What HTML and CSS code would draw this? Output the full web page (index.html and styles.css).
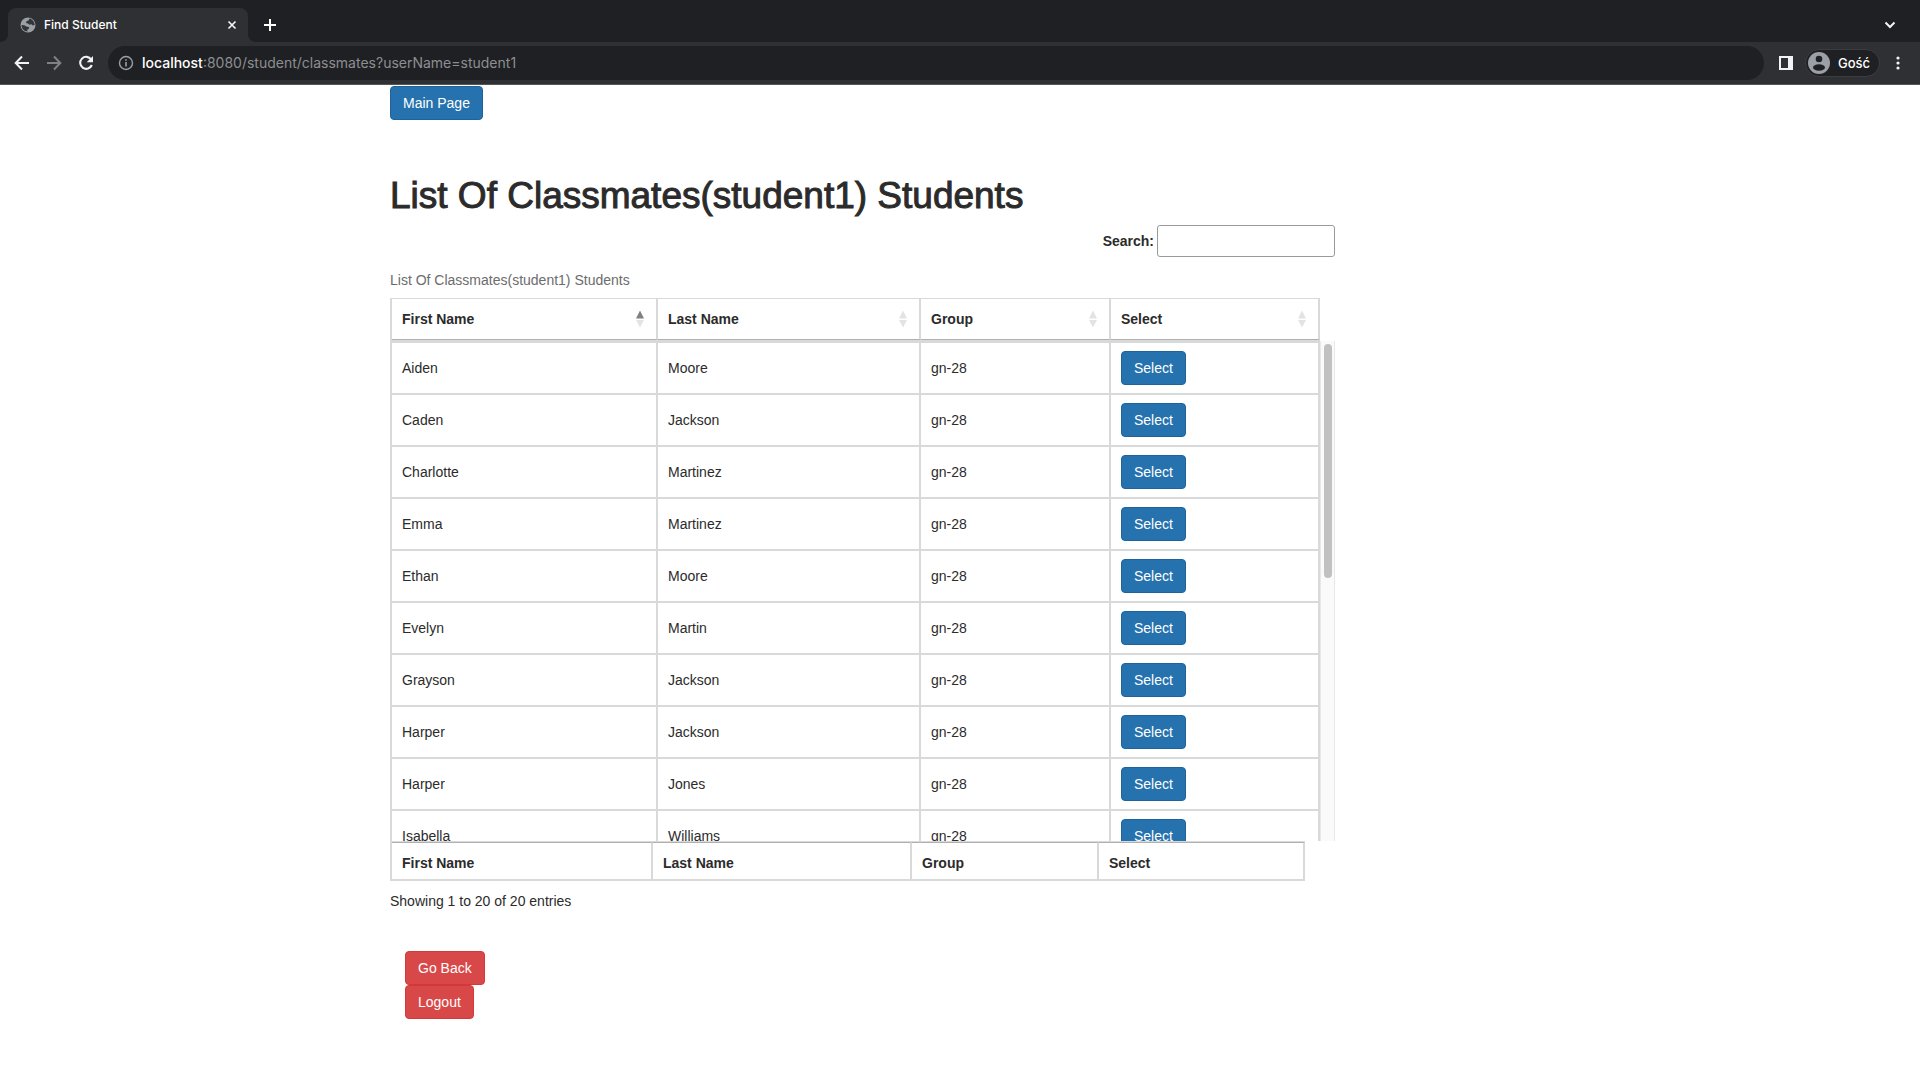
FILE: index.html
```html
<!DOCTYPE html>
<html lang="en">
<head>
<meta charset="utf-8">
<title>Find Student</title>
<link rel="stylesheet" href="styles.css">
</head>
<body>
<header class="browser">
  <div class="tabstrip">
    <div class="tab">
      <svg class="globe" width="16" height="16" viewBox="0 0 16 16"><circle cx="8" cy="8" r="7.500" fill="#9aa0a6"/><path d="M9.500 1.500L8.500 3.500 6.500 4.200 6 6l2 .5 1.500 1.300 2-.6 1.300 1.300 1.900-.5C14.600 5 12.500 2.200 9.500 1.500zM1.500 8l2.800.2L6.500 9.500l2.800.7-.6 1.800-1.500.8.300 1.600C4 14.500 1.500 11.500 1.500 8z" fill="#35363a"/></svg>
      <span class="tab-title">Find Student</span>
      <button class="icon-btn" aria-label="Close tab"><svg width="10" height="10" viewBox="0 0 10 10"><path d="M1.500 1.500l7 7M8.500 1.500l-7 7" stroke="#f1f3f4" stroke-width="1.700"/></svg></button>
    </div>
    <button class="icon-btn new-tab" aria-label="New tab"><svg width="14" height="14" viewBox="0 0 14 14"><path d="M7 1v12M1 7h12" stroke="#fff" stroke-width="2"/></svg></button>
    <button class="icon-btn tab-search" aria-label="Search tabs"><svg width="12" height="8" viewBox="0 0 12 8"><path d="M1.500 1.500L6 6l4.500-4.500" fill="none" stroke="#f1f3f4" stroke-width="2"/></svg></button>
  </div>
  <div class="toolbar">
    <button class="icon-btn nav" aria-label="Back"><svg width="16" height="16" viewBox="0 0 16 16"><path d="M15 8H2M8 1.500L1.700 8 8 14.500" fill="none" stroke="#f1f3f4" stroke-width="2"/></svg></button>
    <button class="icon-btn nav" aria-label="Forward"><svg width="16" height="16" viewBox="0 0 16 16"><path d="M1 8h13M8 1.500L14.300 8 8 14.500" fill="none" stroke="#808185" stroke-width="2"/></svg></button>
    <button class="icon-btn nav" aria-label="Reload"><svg width="16" height="16" viewBox="0 0 16 16"><path d="M13.200 4.500A6 6 0 1 0 13.800 10" fill="none" stroke="#f1f3f4" stroke-width="2.100"/><path d="M15 1v6.300H8.700z" fill="#f1f3f4"/></svg></button>
    <div class="address">
      <svg width="16" height="16" viewBox="0 0 16 16"><circle cx="8" cy="8" r="6.500" fill="none" stroke="#9aa0a6" stroke-width="1.400"/><path d="M8 7v4.500M8 4.200v1.600" stroke="#9aa0a6" stroke-width="1.600"/></svg>
      <span class="url"><b>localhost</b>:8080/student/classmates?userName=student1</span>
    </div>
    <button class="icon-btn panel" aria-label="Side panel"><svg width="14" height="14" viewBox="0 0 14 14"><path fill-rule="evenodd" d="M0 0h14v14H0zM2 2v10h7V2z" fill="#f1f3f4"/></svg></button>
    <button class="profile"><svg width="22" height="22" viewBox="0 0 22 22"><circle cx="11" cy="11" r="11" fill="#9aa0a6"/><circle cx="11" cy="7" r="3.300" fill="#202124"/><ellipse cx="11" cy="15.500" rx="6" ry="3.300" fill="#202124"/></svg>Gość</button>
    <button class="icon-btn menu" aria-label="Menu"><svg width="4" height="14" viewBox="0 0 4 14"><g fill="#f1f3f4"><circle cx="2" cy="2" r="1.600"/><circle cx="2" cy="7" r="1.600"/><circle cx="2" cy="12" r="1.600"/></g></svg></button>
  </div>
</header>

<main class="container">
  <div class="content">
    <a class="btn btn-primary" href="#">Main Page</a>
    <h1>List Of Classmates(student1) Students</h1>
    <div class="filter">
      <label for="search">Search:</label>
      <input id="search" type="search">
    </div>
    <p class="caption" id="caption">List Of Classmates(student1) Students</p>

    <table class="grid grid-head">
      <colgroup><col class="c-first"><col class="c-last"><col class="c-group"><col></colgroup>
      <thead><tr>
        <th><div class="sort asc">First Name</div></th>
        <th><div class="sort">Last Name</div></th>
        <th><div class="sort">Group</div></th>
        <th><div class="sort">Select</div></th>
      </tr></thead>
    </table>
    <div class="scroll">
      <div class="rows">
        <table class="grid grid-body" aria-labelledby="caption">
          <colgroup><col class="c-first"><col class="c-last"><col class="c-group"><col></colgroup>
          <tbody>
            <tr><td>Aiden</td><td>Moore</td><td>gn-28</td><td><a class="btn btn-primary" href="#">Select</a></td></tr>
            <tr><td>Caden</td><td>Jackson</td><td>gn-28</td><td><a class="btn btn-primary" href="#">Select</a></td></tr>
            <tr><td>Charlotte</td><td>Martinez</td><td>gn-28</td><td><a class="btn btn-primary" href="#">Select</a></td></tr>
            <tr><td>Emma</td><td>Martinez</td><td>gn-28</td><td><a class="btn btn-primary" href="#">Select</a></td></tr>
            <tr><td>Ethan</td><td>Moore</td><td>gn-28</td><td><a class="btn btn-primary" href="#">Select</a></td></tr>
            <tr><td>Evelyn</td><td>Martin</td><td>gn-28</td><td><a class="btn btn-primary" href="#">Select</a></td></tr>
            <tr><td>Grayson</td><td>Jackson</td><td>gn-28</td><td><a class="btn btn-primary" href="#">Select</a></td></tr>
            <tr><td>Harper</td><td>Jackson</td><td>gn-28</td><td><a class="btn btn-primary" href="#">Select</a></td></tr>
            <tr><td>Harper</td><td>Jones</td><td>gn-28</td><td><a class="btn btn-primary" href="#">Select</a></td></tr>
            <tr><td>Isabella</td><td>Williams</td><td>gn-28</td><td><a class="btn btn-primary" href="#">Select</a></td></tr>
          </tbody>
        </table>
      </div>
      <div class="track"><div class="thumb"></div></div>
    </div>
    <table class="grid grid-foot">
      <colgroup><col class="f-first"><col class="f-last"><col class="f-group"><col></colgroup>
      <tfoot><tr><th>First Name</th><th>Last Name</th><th>Group</th><th>Select</th></tr></tfoot>
    </table>
    <p class="info">Showing 1 to 20 of 20 entries</p>
    <div class="actions">
      <a class="btn btn-danger" href="#">Go Back</a>
      <a class="btn btn-danger" href="#">Logout</a>
    </div>
  </div>
</main>
</body>
</html>
```
FILE: styles.css
```css
* { box-sizing: border-box; }
body {
  margin: 0;
  background: #fff;
  color: #2b2b2b;
  font: 14px/20px "Helvetica Neue", "Liberation Sans", Arial, sans-serif;
}

/* browser frame */
.browser { background: #1f2023; border-bottom: 1px solid #55565a; font-family: Inter, sans-serif; color: #fff; }
.tabstrip { display: flex; align-items: center; height: 42px; padding: 8px 24px 0 8px; }
.tab {
  position: relative;
  display: flex; align-items: center; gap: 8px;
  width: 240px; height: 34px; padding: 0 11px 0 12px;
  background: #2f3034; border-radius: 8px 8px 0 0;
}
.tab::before, .tab::after {
  content: ""; position: absolute; bottom: 0; width: 8px; height: 8px;
}
.tab::before { left: -8px; background: radial-gradient(circle at 0 0, #1f2023 8px, #2f3034 8px); }
.tab::after { right: -8px; background: radial-gradient(circle at 100% 0, #1f2023 8px, #2f3034 8px); }
.tab-title { flex: 1; font-size: 12px; font-weight: 500; }
.icon-btn { display: flex; padding: 0; border: 0; background: none; }
.new-tab { margin-left: 15px; }
.tab-search { margin-left: auto; }
.toolbar { display: flex; align-items: center; height: 42px; padding: 0 20px 0 14px; background: #2f3034; }
.nav { margin-right: 16px; }
.nav + .nav + .nav { margin-right: 14px; }
.address {
  flex: 1; display: flex; align-items: center; gap: 8px;
  height: 34px; padding: 0 10px; border-radius: 17px; background: #1f2023;
}
.url { font-size: 14px; color: #8d8e91; }
.url b { color: #fff; font-weight: 500; }
.panel { margin: 0 12px 0 15px; }
.profile {
  display: flex; align-items: center; gap: 8px;
  height: 28px; padding: 0 9px 0 2px;
  border: 1px solid #3c3d41; border-radius: 14px; background: #1f2023;
  color: #fff; font: 500 13px/20px Inter, sans-serif;
}
.menu { margin-left: 16px; }

/* page */
.container { max-width: 1170px; margin: 0 auto; padding: 1px 15px 0; }
.content { max-width: 945px; }
.btn {
  display: inline-block; padding: 6px 12px;
  border: 1px solid; border-radius: 4px;
  color: #fff; text-decoration: none; vertical-align: middle;
}
.btn-primary { background: #2672ae; border-color: #20639a; }
.btn-danger { background: #d94848; border-color: #d43838; }
h1 { margin: 54px 0 8px; font-size: 37px; line-height: 43px; font-weight: 400; -webkit-text-stroke: 1px currentColor; }
.filter { display: flex; justify-content: flex-end; align-items: center; gap: 3px; }
.filter label { font-weight: 700; }
.filter input {
  width: 178px; height: 32px; padding: 5px;
  border: 1px solid #999; border-radius: 3px; background: #fff; font: inherit;
  appearance: none;
}
.caption { margin: 13px 0 8px; color: #6c6c6c; }

.grid {
  width: 930px; table-layout: fixed;
  border-collapse: separate; border-spacing: 0;
  border: 0 solid #d9d9d9; border-left-width: 2px;
}
.grid th, .grid td { padding: 8px 10px; border: 0 solid #d9d9d9; border-right-width: 2px; text-align: left; }
.grid .c-first { width: 266px; }
.grid .c-last { width: 263px; }
.grid .c-group { width: 190px; }
.grid-head { border-top-width: 1px; border-bottom-width: 1px; }
.grid-head th { padding: 10px; border-bottom: 1px solid #b0b0b0; }
.sort { display: flex; justify-content: space-between; align-items: center; }
.sort::after {
  content: ""; width: 8px; height: 17px; margin-right: 2px;
  background: #e3e3e3;
  clip-path: polygon(50% 0, 100% 47%, 0 47%, 0 56%, 100% 56%, 50% 100%, 0 56%, 0 47%);
}
.sort.asc::after { background: linear-gradient(#808080 50%, #e3e3e3 50%); }
.scroll { display: flex; height: 500px; }
.rows { width: 930px; overflow: hidden; }
.grid-body { border-top-width: 2px; }
.grid-body td { border-bottom-width: 2px; }
.track { flex: 1; padding: 3px 2px 0 3px; background: #fafafa; border: solid #e8e8e8; border-width: 0 1px; }
.thumb { width: 8px; height: 234px; border-radius: 4px; background: #c1c1c1; }
.grid-foot { width: 915px; border-top-width: 1px; border-bottom-width: 2px; }
.grid-foot th { padding: 10px 10px 6px; border-top: 1px solid #b0b0b0; }
.grid-foot .f-first { width: 261px; }
.grid-foot .f-last { width: 259px; }
.grid-foot .f-group { width: 187px; }
.info { margin: 10px 0 40px; }
.actions { display: flex; flex-direction: column; align-items: flex-start; padding-left: 15px; }
```
